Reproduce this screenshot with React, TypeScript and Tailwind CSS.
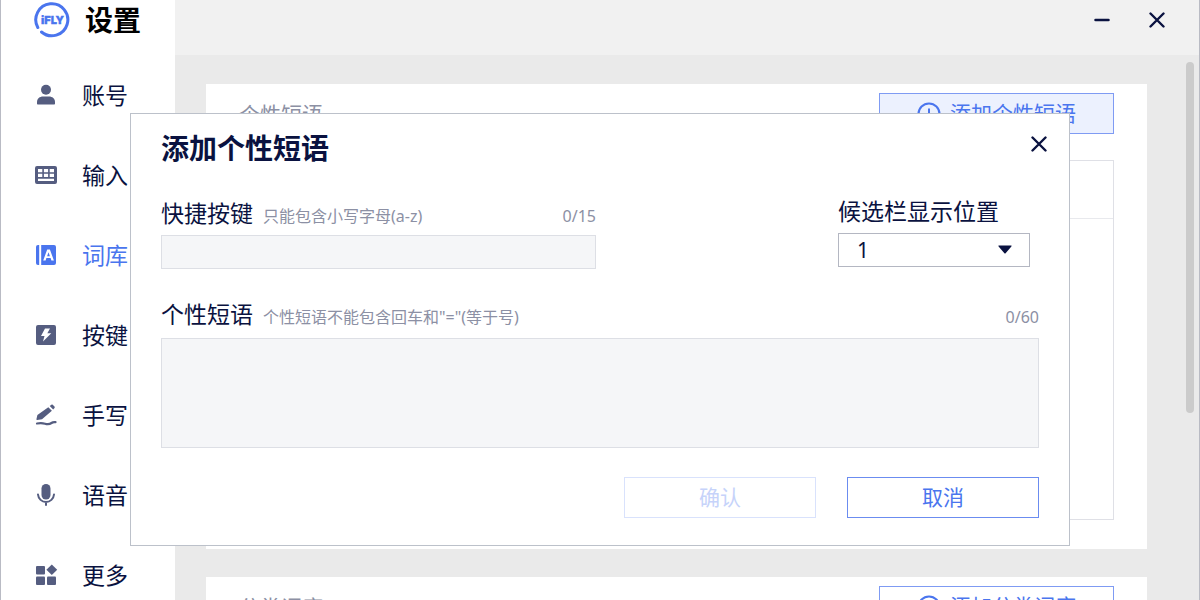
import { useState, type ReactNode } from 'react'

interface NavItem {
  id: string
  label: string
  icon: ReactNode
}

const navItems: NavItem[] = [
  {
    id: 'account',
    label: '账号',
    icon: (
      <>
        <circle cx="12" cy="6.7" r="5" />
        <path d="M3 20.5v-1.5c0-3.300 2.700-5.500 6-5.500h6c3.300 0 6 2.200 6 5.500v1.500c0 .6-.4 1-1 1H4c-.6 0-1-.4-1-1z" />
      </>
    ),
  },
  {
    id: 'input',
    label: '输入',
    icon: (
      <path
        fillRule="evenodd"
        d="M3 3h18a2 2 0 0 1 2 2v14a2 2 0 0 1-2 2H3a2 2 0 0 1-2-2V5a2 2 0 0 1 2-2zM4 6v3.200h4.300V6zM9.900 6v3.200h4.200V6zM15.700 6v3.200H20V6zM4 10.800V14h4.300v-3.200zM9.900 10.800V14h4.200v-3.200zM15.700 10.800V14H20v-3.200zM4 15.800v2.200h16v-2.200z"
      />
    ),
  },
  {
    id: 'lexicon',
    label: '词库',
    icon: (
      <>
        <path d="M4 2h1.200v20H4a2 2 0 0 1-2-2V4a2 2 0 0 1 2-2z" />
        <path
          fillRule="evenodd"
          d="M7.200 2H20a2 2 0 0 1 2 2v16a2 2 0 0 1-2 2H7.200zM13.200 6.500L9.200 17.500h2.400l.8-2.400h4.200l.8 2.400h2.500L15.900 6.500zM14.500 9.200l1.400 4h-2.800z"
        />
      </>
    ),
  },
  {
    id: 'keys',
    label: '按键',
    icon: (
      <path
        fillRule="evenodd"
        d="M4 2h16a2 2 0 0 1 2 2v16a2 2 0 0 1-2 2H4a2 2 0 0 1-2-2V4a2 2 0 0 1 2-2zM11 5.500L7 13h3.500L9 18.500l8.300-8.300h-4L16 5.500z"
      />
    ),
  },
  {
    id: 'handwriting',
    label: '手写',
    icon: (
      <>
        <path d="M14.300 4.200l3.600 3.600L8 16.300l-4.800.8c-.5.1-.9-.3-.8-.8l1-4.300z" />
        <path d="M15.700 3l1.700-1.300c.4-.3.900-.3 1.300.1l1.800 1.800c.4.4.4.9 0 1.300L19.200 6.600z" />
        <path
          d="M3 20.500c3.500-.8 5.500-.6 8 .2s5 .4 6.500-.7 2.500-.9 4-.8"
          fill="none"
          stroke="currentColor"
          strokeWidth="2.200"
          strokeLinecap="round"
        />
      </>
    ),
  },
  {
    id: 'voice',
    label: '语音',
    icon: (
      <>
        <rect x="7.500" y="1" width="9" height="15.500" rx="4.500" />
        <path
          d="M4 11.500c.4 4.300 3.800 7.500 8 7.500s7.600-3.200 8-7.500M12 19v3"
          fill="none"
          stroke="currentColor"
          strokeWidth="2"
          strokeLinecap="round"
        />
      </>
    ),
  },
  {
    id: 'more',
    label: '更多',
    icon: (
      <>
        <rect x="2" y="3" width="9" height="8.500" rx="1" />
        <rect x="2" y="13.500" width="9" height="8.500" rx="1" />
        <rect x="13" y="13.500" width="9" height="8.500" rx="1" />
        <path d="M17.800 1.500l5.400 5.300-5.400 5.300-5.400-5.300z" />
      </>
    ),
  },
]

function Logo() {
  return (
    <svg viewBox="0 0 36 36" className="size-9" aria-label="iFLY">
      <path
        d="M7.500 30A16 16 0 1 0 3.800 25.500"
        fill="none"
        stroke="#4a75ee"
        strokeWidth="3"
        strokeLinecap="round"
      />
      <text
        x="18.500"
        y="22"
        textAnchor="middle"
        fontSize="11"
        fontWeight="900"
        fill="#4a75ee"
        stroke="#4a75ee"
        strokeWidth=".3"
        fontFamily="Inter, sans-serif"
      >
        iFLY
      </text>
    </svg>
  )
}

function CloseIcon() {
  return (
    <svg viewBox="0 0 16 16" className="size-4" fill="none" stroke="#0a1240" strokeWidth="2.400" strokeLinecap="round">
      <path d="M1.500 1.500l13 13M14.500 1.500l-13 13" />
    </svg>
  )
}

function Sidebar({ active, onSelect }: { active: string; onSelect: (id: string) => void }) {
  return (
    <aside className="flex w-[174px] shrink-0 flex-col bg-white">
      <div className="flex h-[55px] shrink-0 items-start gap-[15px] pl-[33px]">
        <div className="flex h-[39px] items-center">
          <Logo />
        </div>
        <h1 className="text-[28px] leading-10 font-bold text-black">设置</h1>
      </div>
      <nav className="flex flex-col">
        {navItems.map((item) => (
          <button
            key={item.id}
            onClick={() => onSelect(item.id)}
            className="flex h-20 shrink-0 items-center gap-6 pl-[33px]"
          >
            <svg
              viewBox="0 0 24 24"
              fill="currentColor"
              className={item.id === active ? 'size-6 text-[#4a75ee]' : 'size-6 text-[#555d80]'}
            >
              {item.icon}
            </svg>
            <span className={item.id === active ? 'text-[23px] text-[#4a75ee]' : 'text-[23px] text-[#0a1240]'}>
              {item.label}
            </span>
          </button>
        ))}
      </nav>
    </aside>
  )
}

function PhraseCard({ title, action, highlighted }: { title: string; action: string; highlighted?: boolean }) {
  return (
    <section className="shrink-0 bg-white px-[33px] pt-[9px] pb-[29px]">
      <div className="flex items-center justify-between">
        <h2 className="text-[21px] leading-10 text-[#8c90a4]">{title}</h2>
        <button
          className={
            highlighted
              ? 'flex h-[41px] w-[235px] items-center justify-center gap-[9px] border border-[#7f9bf3] bg-[#ecf1fe] text-[21px] text-[#4a75ee]'
              : 'flex h-[41px] w-[235px] items-center justify-center gap-[9px] border border-[#7f9bf3] bg-white text-[21px] text-[#4a75ee]'
          }
        >
          <svg viewBox="0 0 24 24" className="size-6" fill="none" stroke="currentColor" strokeWidth="2">
            <circle cx="12" cy="12" r="10.500" />
            <path d="M12 6.500v11M6.500 12h11" />
          </svg>
          {action}
        </button>
      </div>
      <div className="mt-[26px] h-[360px] border border-[#dfe0e6]">
        <div className="h-[58px] border-b border-[#e8e9ed]" />
      </div>
    </section>
  )
}

function AddPhraseDialog() {
  const [shortcut, setShortcut] = useState('')
  const [phrase, setPhrase] = useState('')

  return (
    <div
      role="dialog"
      aria-labelledby="dialog-title"
      className="absolute inset-x-[129px] top-[113px] border border-[#bcc1ca] bg-white px-[30px] pt-[14px] pb-[27px]"
    >
      <div className="-mr-2 flex items-start justify-between">
        <h2 id="dialog-title" className="text-[28px] leading-10 font-bold text-[#0a1240]">
          添加个性短语
        </h2>
        <button aria-label="关闭" className="flex h-8 items-center">
          <CloseIcon />
        </button>
      </div>

      <div className="mt-[27px] flex items-start justify-between pr-[9px]">
        <div className="w-[435px] pt-0.5">
          <div className="flex h-8 items-baseline">
            <label htmlFor="shortcut" className="text-[23px] leading-8 text-[#0a1240]">
              快捷按键
            </label>
            <span className="ml-[10px] text-[16px] leading-8 text-[#8c90a4]">只能包含小写字母(a-z)</span>
            <span className="ml-auto text-[16px] leading-8 text-[#8c90a4]">{shortcut.length}/15</span>
          </div>
          <input
            id="shortcut"
            type="text"
            maxLength={15}
            value={shortcut}
            onChange={(e) => setShortcut(e.target.value)}
            className="mt-1.5 block h-[34px] w-full border border-[#dddfe5] bg-[#f5f6f8] px-3 text-[16px] outline-none"
          />
        </div>
        <div className="w-[192px]">
          <label htmlFor="position" className="block text-[23px] leading-8 text-[#0a1240]">
            候选栏显示位置
          </label>
          <div className="relative mt-1.5">
            <select
              id="position"
              defaultValue="1"
              className="block h-[34px] w-full appearance-none border border-[#b4b7c2] bg-white pl-[18px] text-[21px] leading-8 text-[#0a1240] outline-none"
            >
              <option>1</option>
              <option>2</option>
              <option>3</option>
              <option>4</option>
              <option>5</option>
            </select>
            <svg viewBox="0 0 14 9" className="pointer-events-none absolute top-3 right-[18px] h-[9px] w-[14px]" fill="#0a1240">
              <path d="M1 .5h12c.6 0 .8.5.4.9L7.600 8.200c-.3.400-.9.400-1.200 0L.6 1.400C.2 1 .4.500 1 .5z" />
            </svg>
          </div>
        </div>
      </div>

      <div className="mt-[29px]">
        <div className="flex h-8 items-baseline">
          <label htmlFor="phrase" className="text-[23px] leading-8 text-[#0a1240]">
            个性短语
          </label>
          <span className="ml-[10px] text-[16px] leading-8 text-[#8c90a4]">个性短语不能包含回车和"="(等于号)</span>
          <span className="ml-auto text-[16px] leading-8 text-[#8c90a4]">{phrase.length}/60</span>
        </div>
        <textarea
          id="phrase"
          maxLength={60}
          value={phrase}
          onChange={(e) => setPhrase(e.target.value)}
          className="mt-2 block h-[110px] w-full resize-none border border-[#dddfe5] bg-[#f5f6f8] p-3 text-[16px] outline-none"
        />
      </div>

      <div className="mt-[29px] flex justify-end gap-[31px]">
        <button disabled className="h-[41px] w-[192px] border border-[#d9e2fc] text-[21px] text-[#c6d3fa]">
          确认
        </button>
        <button className="h-[41px] w-[192px] border border-[#6b8cf0] text-[21px] text-[#4a75ee]">取消</button>
      </div>
    </div>
  )
}

export default function App() {
  const [active, setActive] = useState('lexicon')

  return (
    <div className="relative flex h-screen overflow-hidden border-x border-[#b9bbc4] bg-[#eaeaea] font-['Noto_Sans','Noto_Sans_CJK_SC',sans-serif]">
      <Sidebar active={active} onSelect={setActive} />

      <main className="flex min-w-0 flex-1 flex-col">
        <header className="flex h-[55px] shrink-0 items-start justify-end bg-[#f1f1f1] pr-[34px]">
          <div className="flex h-10 items-center gap-[39px]">
            <button aria-label="最小化">
              <svg viewBox="0 0 16 16" className="size-4" stroke="#0a1240" strokeWidth="2.500" strokeLinecap="round">
                <path d="M1.500 8h13" />
              </svg>
            </button>
            <button aria-label="关闭窗口">
              <CloseIcon />
            </button>
          </div>
        </header>

        <div className="flex min-h-0 flex-1">
          <div className="flex min-w-0 flex-1 flex-col gap-7 overflow-hidden pt-[29px] pr-[39px] pl-[31px]">
            <PhraseCard title="个性短语" action="添加个性短语" highlighted />
            <PhraseCard title="分类词库" action="添加分类词库" />
          </div>
          <div className="mr-[5px] w-2 pt-[7px]">
            <div className="h-[351px] rounded-full bg-[#cbcbcb]" />
          </div>
        </div>
      </main>

      <AddPhraseDialog />
    </div>
  )
}
